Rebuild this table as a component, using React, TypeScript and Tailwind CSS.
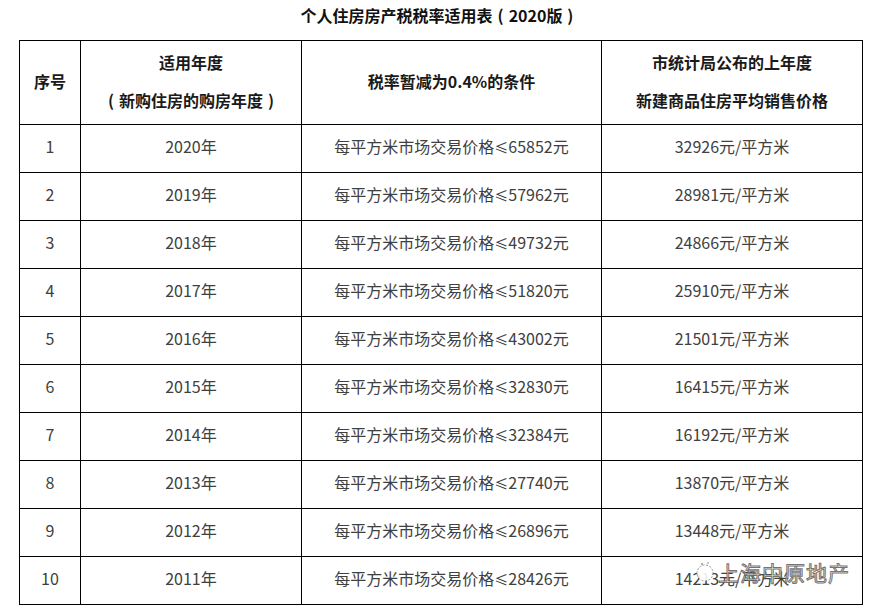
import React from "react";

const rows = [
  ["1", "2020年", "65852", "32926"],
  ["2", "2019年", "57962", "28981"],
  ["3", "2018年", "49732", "24866"],
  ["4", "2017年", "51820", "25910"],
  ["5", "2016年", "43002", "21501"],
  ["6", "2015年", "32830", "16415"],
  ["7", "2014年", "32384", "16192"],
  ["8", "2013年", "27740", "13870"],
  ["9", "2012年", "26896", "13448"],
  ["10", "2011年", "28426", "14213"],
];

function P({ c }: { c: string }) {
  return <span className="inline-block w-[16px] text-center">{c}</span>;
}

export default function App() {
  return (
    <div
      className="w-[879px] h-[609px] bg-white relative overflow-hidden"
      style={{ fontFamily: '"Noto Sans CJK SC", "Noto Sans", sans-serif' }}
    >
      <div className="h-[40px] flex items-start justify-center pt-[3px]">
        <span className="text-[16px] font-bold text-[#111] leading-[24px]">
          个人住房房产税税率适用表<P c="(" />2020版<P c=")" />
        </span>
      </div>
      <div className="pl-[19px]">
        <table className="border-collapse table-fixed w-[843px]">
          <colgroup>
            <col className="w-[61px]" />
            <col className="w-[221px]" />
            <col className="w-[300px]" />
            <col className="w-[261px]" />
          </colgroup>
          <thead>
            <tr className="h-[84px]">
              <th className="border border-black text-[16px] font-bold text-[#1a1a1a] text-center align-middle pb-[4px]">
                序号
              </th>
              <th className="border border-black text-[16px] font-bold text-[#1a1a1a] text-center align-middle leading-[38px] pb-[4px]">
                <div>适用年度</div>
                <div>
                  <P c="(" />新购住房的购房年度<P c=")" />
                </div>
              </th>
              <th className="border border-black text-[16px] font-bold text-[#1a1a1a] text-center align-middle pb-[4px]">
                税率暂减为0.4%的条件
              </th>
              <th className="border border-black text-[16px] font-bold text-[#1a1a1a] text-center align-middle leading-[38px] pb-[4px]">
                <div>市统计局公布的上年度</div>
                <div>新建商品住房平均销售价格</div>
              </th>
            </tr>
          </thead>
          <tbody>
            {rows.map((r) => (
              <tr key={r[0]} className="h-[48px]">
                <td className="border border-black text-[16px] text-[#404040] text-center align-middle pb-[5px]">
                  {r[0]}
                </td>
                <td className="border border-black text-[16px] text-[#404040] text-center align-middle pb-[5px]">
                  {r[1]}
                </td>
                <td className="border border-black text-[16px] text-[#404040] text-center align-middle pb-[5px]">
                  每平方米市场交易价格<span className="text-[14px]">≤</span>{r[2]}元
                </td>
                <td className="border border-black text-[16px] text-[#404040] text-center align-middle pb-[5px]">
                  {r[3]}元/平方米
                </td>
              </tr>
            ))}
          </tbody>
        </table>
      </div>
      <div className="absolute left-[694px] top-[559px] flex items-center gap-[2px] opacity-90">
        <svg width="22" height="24" viewBox="0 0 22 24" fill="none">
          <circle cx="11" cy="13" r="8" fill="white" stroke="#888" strokeWidth="1" strokeDasharray="2 1.5" />
          <circle cx="8" cy="4" r="1.2" fill="#aaa" />
          <circle cx="14" cy="3" r="1" fill="#aaa" />
        </svg>
        <span className="text-[21px] leading-[26px] text-white [-webkit-text-stroke:1px_#666] tracking-[1px]">
          上海中原地产
        </span>
      </div>
    </div>
  );
}
